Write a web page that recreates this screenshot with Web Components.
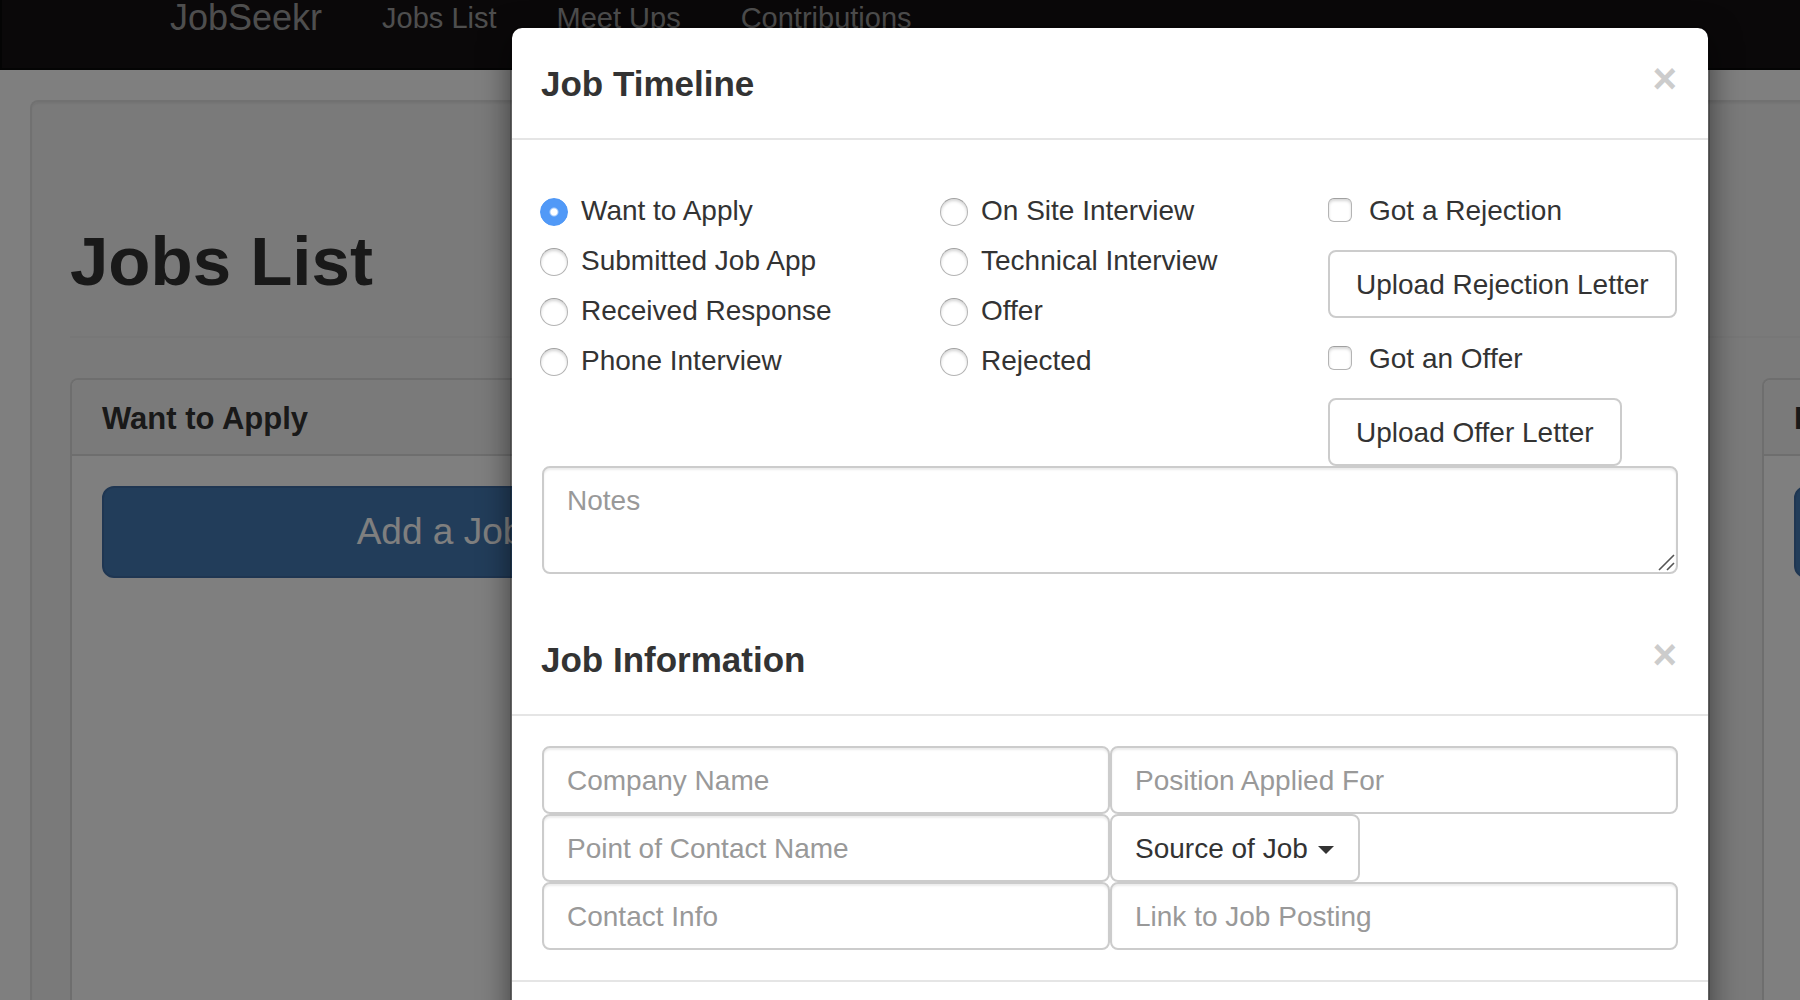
<!DOCTYPE html>
<html lang="en">
<head>
<meta charset="utf-8">
<title>JobSeekr</title>
<style>
  html, body { margin: 0; height: 100%; overflow: hidden; background: #fff; }
  body { font: 28px/40px "Liberation Sans", Arial, sans-serif; color: #333; }
</style>
</head>
<body>
<job-app>
  <job-navbar slot="nav"></job-navbar>
  <job-board heading="Jobs List">
    <job-panel heading="Want to Apply"></job-panel>
    <job-panel heading="Phone Interview" class="last"></job-panel>
  </job-board>
  <job-modal slot="modal">
    <modal-section heading="Job Timeline"><job-timeline></job-timeline></modal-section>
    <modal-section heading="Job Information"><job-information></job-information></modal-section>
  </job-modal>
</job-app>

<script>
const define = (name, html, setup) => {
  const template = document.createElement('template');
  template.innerHTML = '<style>*{box-sizing:border-box}</style>' + html;
  customElements.define(name, class extends HTMLElement {
    constructor() {
      super();
      this.attachShadow({ mode: 'open' }).append(template.content.cloneNode(true));
    }
    connectedCallback() { if (setup) setup(this, this.shadowRoot); }
  });
};
const setHeading = (host, root) => {
  root.querySelector('.heading').textContent = host.getAttribute('heading');
};

/* The page is wider than the window and scrolled down a little. */
define('job-app', `
  <style>
    :host { display: block; height: 100vh; overflow: hidden; }
    .page { position: relative; width: calc(100% + 420px); margin-top: -34px; min-height: calc(100vh + 34px); display: flex; flex-direction: column; }
    main { flex: 1; display: flex; flex-direction: column; }
    .overlay { position: absolute; inset: 0; display: flex; justify-content: center; align-items: flex-start; padding-top: 60px; background: rgba(0,0,0,.5); }
  </style>
  <div class="page">
    <slot name="nav"></slot>
    <main><slot></slot></main>
    <div class="overlay"><slot name="modal"></slot></div>
  </div>`);

define('job-navbar', `
  <style>
    :host { display: block; background: #151113; border: 2px solid #080808; }
    nav { display: flex; align-items: center; gap: 60px; padding: 30px 168px; }
    a { color: #9d9d9d; text-decoration: none; white-space: nowrap; font-size: 29px; }
    .brand { font-size: 36px; }
  </style>
  <nav>
    <a class="brand" href="#">JobSeekr</a>
    <a href="#jobs">Jobs List</a>
    <a href="#meetups">Meet Ups</a>
    <a href="#contributions">Contributions</a>
  </nav>`);

define('job-board', `
  <style>
    :host { flex: 1; display: flex; flex-direction: column; margin: 30px 30px 0; padding: 38px 38px 0; background: #f5f5f5;
      border: 2px solid #e3e3e3; border-bottom: 0; border-radius: 8px 8px 0 0; box-shadow: inset 0 2px 2px rgba(0,0,0,.05); }
    header { margin: 80px 0 40px; padding-bottom: 32px; border-bottom: 2px solid #eee; }
    h1 { margin: 0; font-size: 69px; line-height: 84px; font-weight: 700; }
    .columns { flex: 1; display: grid; grid-template-columns: repeat(3, 740px); column-gap: 106px; }
    ::slotted(.last) { grid-column: 3; }
  </style>
  <header><h1 class="heading"></h1></header>
  <div class="columns"><slot></slot></div>`, setHeading);

define('job-panel', `
  <style>
    :host { display: block; background: #fff; border: 2px solid #ddd; border-bottom: 0; border-radius: 8px 8px 0 0; }
    header { padding: 20px 30px 16px; background: #f5f5f5; border-bottom: 2px solid #ddd; border-radius: 6px 6px 0 0; }
    h3 { margin: 0; font-size: 31px; line-height: 38px; font-weight: 700; }
    .body { padding: 30px; }
    button { display: block; width: 100%; padding: 20px 32px; font: 37px/48px "Liberation Sans", Arial, sans-serif; color: #fff;
      background: #447ab4; border: 2px solid #3e6da4; border-radius: 12px; }
  </style>
  <header><h3 class="heading"></h3></header>
  <div class="body"><button type="button">Add a Job</button></div>`, setHeading);

define('job-modal', `
  <style>
    :host { display: block; box-sizing: border-box; width: 1200px; background: #fff; background-clip: padding-box;
      border: 2px solid rgba(0,0,0,.2); border-radius: 12px; box-shadow: 0 10px 30px rgba(0,0,0,.5); }
    footer { height: 128px; border-top: 2px solid #e5e5e5; }
  </style>
  <slot></slot>
  <footer></footer>`);

define('modal-section', `
  <style>
    :host { display: block; }
    header { display: flex; justify-content: space-between; align-items: flex-start; padding: 30px 31px 28px 29px; border-bottom: 2px solid #e5e5e5; }
    h4 { margin: 0; font-size: 35px; line-height: 52px; font-weight: 700; }
    button { padding: 0; border: 0; background: none; font: bold 42px/42px "Liberation Sans", Arial, sans-serif; color: #ccc; }
    .body { padding: 0 30px 30px; }
  </style>
  <header><h4 class="heading"></h4><button type="button" aria-label="Close">×</button></header>
  <div class="body"><slot></slot></div>`, setHeading);

const control = `
  <style>
    input, textarea, select, button { font: inherit; color: inherit; margin: 0; }
    .control { display: block; width: 100%; padding: 13px 23px 11px; border: 2px solid #ccc; border-radius: 8px; background: #fff;
      box-shadow: inset 0 2px 2px rgba(0,0,0,.075); }
    .control::placeholder { color: #999; opacity: 1; }
  </style>`;

define('job-timeline', control + `
  <style>
    :host { display: block; padding-top: 51px; }
    form { display: grid; grid-template-columns: 398px 388px 1fr; }
    fieldset { display: contents; }
    .stack { display: flex; flex-direction: column; gap: 10px; margin-left: -2px; }
    .stack + .stack { margin-left: 0; }
    .uploads { display: flex; flex-direction: column; align-items: flex-start; gap: 19px; }
    label { display: flex; gap: 13px; white-space: nowrap; }
    .uploads label { gap: 17px; }
    .uploads button + label { margin-top: 2px; }
    label input { appearance: none; flex: none; margin-top: 7px; border: 1px solid #b4b4b4; background: #fff;
      border-top-color: #a0a0a0; box-shadow: inset 0 2px 3px rgba(0,0,0,.16); }
    input[type=radio] { width: 28px; height: 28px; border-radius: 50%; }
    input[type=radio]:checked { border-color: #4e97f6; box-shadow: none; background: radial-gradient(circle, #fff 3px, #5199f7 5px); }
    input[type=checkbox] { width: 24px; height: 24px; border-radius: 6px; }
    .uploads button { padding: 13px 26px 11px; border: 2px solid #ccc; border-radius: 8px; background: #fff; white-space: nowrap; }
    .notes { position: relative; grid-column: 1 / -1; }
    textarea { height: 108px; resize: none; }
    .grip { position: absolute; right: 2px; bottom: 2px; }
  </style>
  <form>
    <fieldset>
      <div class="stack">
        <label><input type="radio" name="stage" checked>Want to Apply</label>
        <label><input type="radio" name="stage">Submitted Job App</label>
        <label><input type="radio" name="stage">Received Response</label>
        <label><input type="radio" name="stage">Phone Interview</label>
      </div>
      <div class="stack">
        <label><input type="radio" name="stage">On Site Interview</label>
        <label><input type="radio" name="stage">Technical Interview</label>
        <label><input type="radio" name="stage">Offer</label>
        <label><input type="radio" name="stage">Rejected</label>
      </div>
    </fieldset>
    <div class="uploads">
      <label><input type="checkbox">Got a Rejection</label>
      <button type="button">Upload Rejection Letter</button>
      <label><input type="checkbox">Got an Offer</label>
      <button type="button">Upload Offer Letter</button>
    </div>
    <div class="notes">
      <textarea class="control" placeholder="Notes" aria-label="Notes"></textarea>
      <svg class="grip" width="18" height="18" viewBox="0 0 18 18" fill="none" stroke="#555" stroke-width="1.6" aria-hidden="true"><path d="M1 16 16 1M9 16l7-7"/></svg>
    </div>
  </form>`);

define('job-information', control + `
  <style>
    :host { display: block; padding-top: 30px; }
    form { display: grid; grid-template-columns: 1fr 1fr; }
    .source { position: relative; justify-self: start; }
    select.control { appearance: none; width: auto; padding-right: 50px; box-shadow: none; }
    .caret { position: absolute; right: 26px; top: 32px; pointer-events: none; }
  </style>
  <form>
    <input class="control" placeholder="Company Name" aria-label="Company Name">
    <input class="control" placeholder="Position Applied For" aria-label="Position Applied For">
    <input class="control" placeholder="Point of Contact Name" aria-label="Point of Contact Name">
    <div class="source">
      <select class="control" aria-label="Source of Job"><option>Source of Job</option></select>
      <svg class="caret" width="16" height="8" viewBox="0 0 16 8" fill="#333" aria-hidden="true"><path d="M0 0h16L8 8z"/></svg>
    </div>
    <input class="control" placeholder="Contact Info" aria-label="Contact Info">
    <input class="control" placeholder="Link to Job Posting" aria-label="Link to Job Posting">
  </form>`);
</script>
</body>
</html>
